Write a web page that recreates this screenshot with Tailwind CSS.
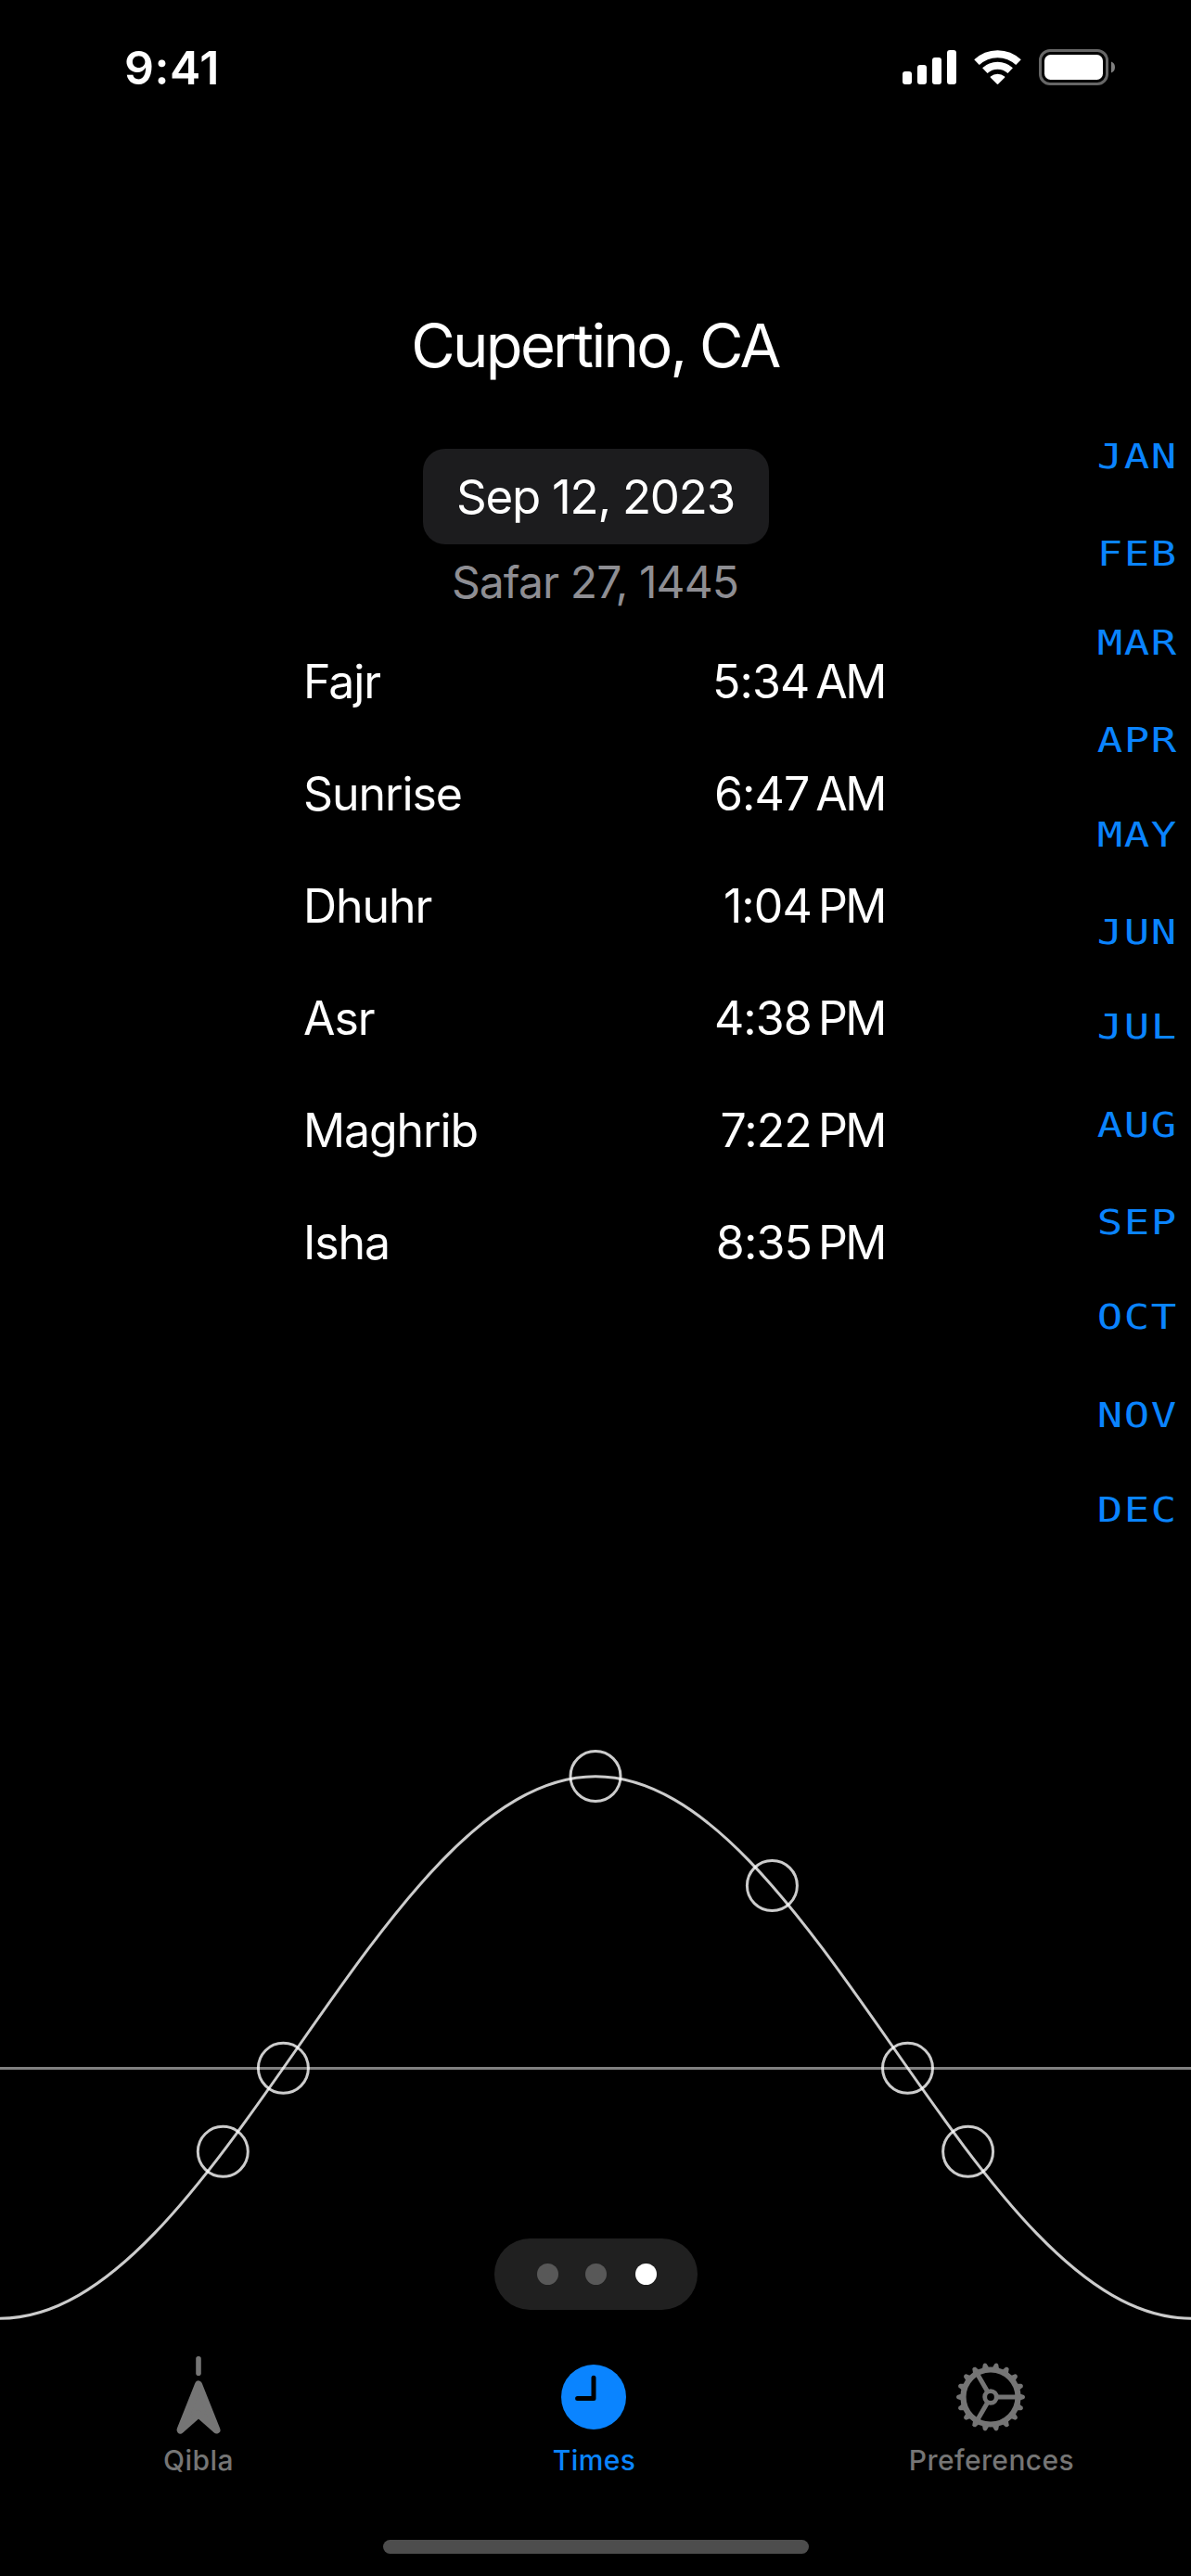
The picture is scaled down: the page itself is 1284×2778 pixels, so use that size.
<!DOCTYPE html>
<html lang="en">
<head>
<meta charset="utf-8">
<title>Prayer Times</title>
<script src="https://cdn.jsdelivr.net/npm/@tailwindcss/browser@4"></script>
</head>
<body class="bg-black">
<div class="relative flex h-[2778px] w-[1284px] flex-col overflow-hidden bg-black font-[Inter,sans-serif] text-white">

  <!-- Status bar -->
  <header class="flex h-[145px] shrink-0 items-center justify-between pl-[134px] pr-[80px]">
    <span class="text-[50px] leading-none font-[560] tracking-[0.5px]">9:41</span>
    <svg class="h-[40px] w-[232px]" viewBox="972 53 232 40" fill="#fff">
      <rect x="973" y="77" width="10" height="14" rx="3"/>
      <rect x="989" y="70" width="10" height="21" rx="3"/>
      <rect x="1005" y="62" width="10" height="29" rx="3"/>
      <rect x="1021" y="54" width="10" height="37" rx="3"/>
      <g fill="none" stroke="#fff" stroke-width="8">
        <path d="M1053 67.2a32.5 32.5 0 0 1 45 0"/>
        <path d="M1061.8 76.2a20 20 0 0 1 27.4 0"/>
      </g>
      <path d="M1067.9 82.6a11.3 11.3 0 0 1 15.2 0q.6.6 0 1.2l-6.8 6.8q-.8.8-1.6 0l-6.8-6.8q-.6-.6 0-1.2z"/>
      <rect x="1121.5" y="54.5" width="72" height="36" rx="10.5" fill="none" stroke="#666" stroke-width="3"/>
      <rect x="1126" y="59" width="63" height="27" rx="6.5"/>
      <path d="M1198 66.500a6.500 6.500 0 0 1 0 12z" fill="#808080"/>
    </svg>
  </header>

  <div class="grid h-[1745px] shrink-0 grid-cols-[307px_1fr_307px]">
    <!-- Prayer times -->
    <main class="col-start-2 flex flex-col items-center pt-[187px]">
      <h1 class="flex h-[80px] items-center pr-[1px] text-[65px] leading-none tracking-[-2.7px]">Cupertino, CA</h1>
      <div class="mt-[72px] flex h-[103px] w-[373px] items-center justify-center rounded-[24px] bg-[#1c1c1e] text-[51px] leading-none tracking-[-1.25px]">Sep 12, 2023</div>
      <div class="flex h-[81px] items-center pr-[1px] text-[48px] leading-none tracking-[-0.9px] text-[#8e8e93]">Safar 27, 1445</div>
      <dl class="mt-[6px] flex w-full flex-col pl-[20px] pr-[23px] text-[50px] leading-none tracking-[-1.1px]">
        <div class="flex h-[121px] items-center justify-between"><dt>Fajr</dt><dd class="flex gap-[7px]"><span class="tracking-[-0.9px]">5:34</span><span class="tracking-[-2.5px]">AM</span></dd></div>
        <div class="flex h-[121px] items-center justify-between"><dt>Sunrise</dt><dd class="flex gap-[7px]"><span class="tracking-[-0.9px]">6:47</span><span class="tracking-[-2.5px]">AM</span></dd></div>
        <div class="flex h-[121px] items-center justify-between"><dt>Dhuhr</dt><dd class="flex gap-[7px]"><span class="tracking-[-0.9px]">1:04</span><span class="tracking-[-2.5px]">PM</span></dd></div>
        <div class="flex h-[121px] items-center justify-between"><dt>Asr</dt><dd class="flex gap-[7px]"><span class="tracking-[-0.9px]">4:38</span><span class="tracking-[-2.5px]">PM</span></dd></div>
        <div class="flex h-[121px] items-center justify-between"><dt>Maghrib</dt><dd class="flex gap-[7px]"><span class="tracking-[-0.9px]">7:22</span><span class="tracking-[-2.5px]">PM</span></dd></div>
        <div class="flex h-[121px] items-center justify-between"><dt>Isha</dt><dd class="flex gap-[7px]"><span class="tracking-[-0.9px]">8:35</span><span class="tracking-[-2.5px]">PM</span></dd></div>
      </dl>
    </main>

    <!-- Month index -->
    <nav class="flex flex-col items-end pr-[21px] pt-[317px] font-['DejaVu_Sans_Mono',monospace] text-[38px] leading-[60px] tracking-[1.3px] text-[#0a84ff]">
      <a class="scale-x-[1.2]">JAN</a>
      <a class="mt-[45px] scale-x-[1.2]">FEB</a>
      <a class="mt-[36px] scale-x-[1.2]">MAR</a>
      <a class="mt-[45px] scale-x-[1.2]">APR</a>
      <a class="mt-[42px] scale-x-[1.2]">MAY</a>
      <a class="mt-[45px] scale-x-[1.2]">JUN</a>
      <a class="mt-[42px] scale-x-[1.2]">JUL</a>
      <a class="mt-[46px] scale-x-[1.2]">AUG</a>
      <a class="mt-[45px] scale-x-[1.2]">SEP</a>
      <a class="mt-[42px] scale-x-[1.2]">OCT</a>
      <a class="mt-[46px] scale-x-[1.2]">NOV</a>
      <a class="mt-[42px] scale-x-[1.2]">DEC</a>
    </nav>
  </div>

  <!-- Sun path -->
  <section class="relative h-[630px] shrink-0">
    <svg class="h-[630px] w-[1284px] overflow-visible" viewBox="0 1890 1284 630" fill="none" stroke-width="3">
      <path d="M0 2230.500H1284" stroke="#808080"/>
      <g stroke="#fff" stroke-opacity=".8">
        <path d="M0 2500.200C233.800 2500.200 408.200 1915.800 642 1915.800S1050.200 2500.200 1284 2500.200"/>
        <circle cx="240.300" cy="2320.300" r="27"/>
        <circle cx="305.400" cy="2230.300" r="27"/>
        <circle cx="642" cy="1915.500" r="27"/>
        <circle cx="832.400" cy="2033.500" r="27"/>
        <circle cx="978.500" cy="2230.300" r="27"/>
        <circle cx="1043.600" cy="2320.300" r="27"/>
      </g>
    </svg>
    <!-- Page control -->
    <div class="absolute left-[533px] top-[524px] flex h-[77px] w-[219px] items-center rounded-full bg-[#202020] pl-[46px]">
      <span class="size-[23px] rounded-full bg-[#585858]"></span>
      <span class="ml-[29px] size-[23px] rounded-full bg-[#585858]"></span>
      <span class="ml-[31px] size-[23px] rounded-full bg-white"></span>
    </div>
  </section>

  <!-- Tab bar -->
  <nav class="grid h-[164px] shrink-0 grid-cols-3 pr-[3px] text-[30px] leading-none font-medium tracking-[0.4px] text-[#757575]">
    <a class="flex flex-col items-center">
      <svg class="mt-[20px] h-[88px] w-[50px]" viewBox="0 0 50 88" fill="#757575">
        <rect x="22.200" y="1" width="5.600" height="21" rx="2.800"/>
        <path d="M25 31.500L44.500 80.500L25 63.200L5.500 80.500z" stroke="#757575" stroke-width="8" stroke-linejoin="round"/>
      </svg>
      <span class="mt-[10px] pl-[1px]">Qibla</span>
    </a>
    <a class="flex flex-col items-center text-[#0a84ff]">
      <svg class="mt-[29px] mr-[2px] h-[72px] w-[72px]" viewBox="0 0 72 72">
        <circle cx="36" cy="36" r="35" fill="#0a84ff"/>
        <path d="M36 15.200V37.600H18.600" fill="none" stroke="#000" stroke-width="5" stroke-linecap="round" stroke-linejoin="round"/>
      </svg>
      <span class="mt-[17px]">Times</span>
    </a>
    <a class="flex flex-col items-center">
      <svg class="mt-[26px] h-[78px] w-[78px]" viewBox="-39 -39 78 78" fill="none" stroke="#757575">
        <circle r="29.500" stroke-width="6.200"/>
        <circle r="6.300" stroke-width="4.800"/>
        <path d="M8 0H28M-4 -6.930L-14 -24.250M-4 6.930L-14 24.250" stroke-width="5"/>
        <g id="teeth" fill="#757575" stroke="none"></g>
      </svg>
      <span class="mt-[14px] pl-[3px]">Preferences</span>
    </a>
  </nav>

  <!-- Home indicator -->
  <div class="mx-auto mt-[55px] h-[15px] w-[459px] shrink-0 rounded-full bg-[#4d4d4d]"></div>
</div>
<script>
  // 18 evenly spaced gear teeth
  document.getElementById('teeth').innerHTML = Array.from({ length: 18 }, (_, i) =>
    `<path transform="rotate(${i * 20})" d="M31 -3.800L36 -2Q38 0 36 2L31 3.800z"/>`).join('');
</script>
</body>
</html>
